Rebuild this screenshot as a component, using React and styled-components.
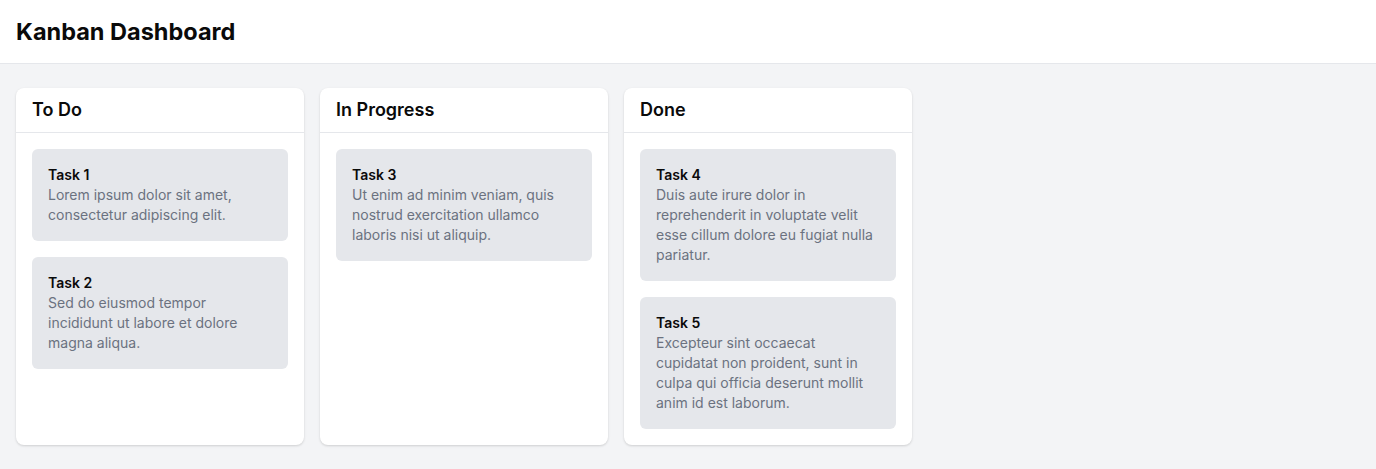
import React from "react";
import styled, { createGlobalStyle } from "styled-components";

const Global = createGlobalStyle`
  html, body { margin: 0; padding: 0; }
  body {
    font-family: Inter, "Noto Sans", sans-serif;
    background: #f3f4f6;
    color: #111827;
    -webkit-font-smoothing: antialiased;
  }
  * { box-sizing: border-box; }
`;

const Page = styled.div`
  min-height: 469px;
  background: #f3f4f6;
`;

const Header = styled.header`
  background: #ffffff;
  border-bottom: 1px solid #e5e7eb;
  padding: 16px;
`;

const Title = styled.h1`
  margin: 0;
  font-size: 23.5px;
  line-height: 31px;
  font-weight: 700;
  color: #0a0a0a;
`;

const Board = styled.main`
  display: flex;
  align-items: stretch;
  gap: 16px;
  padding: 24px 16px;
`;

const Column = styled.section`
  width: 288px;
  background: #ffffff;
  border-radius: 8px;
  box-shadow: 0 1px 3px rgba(0, 0, 0, 0.1), 0 1px 2px rgba(0, 0, 0, 0.06);
  display: flex;
  flex-direction: column;
`;

const ColumnHeader = styled.div`
  padding: 8px 16px;
  border-bottom: 1px solid #e5e7eb;
`;

const ColumnTitle = styled.h2`
  margin: 0;
  font-size: 18px;
  line-height: 28px;
  font-weight: 600;
  color: #0a0a0a;
`;

const CardList = styled.div`
  padding: 16px;
  display: flex;
  flex-direction: column;
  gap: 16px;
`;

const Card = styled.div`
  background: #e5e7eb;
  border-radius: 6px;
  padding: 16px;
`;

const CardTitle = styled.h3`
  margin: 0;
  font-size: 14px;
  line-height: 20px;
  font-weight: 600;
  color: #0a0a0a;
`;

const CardText = styled.p`
  margin: 0;
  font-size: 14px;
  line-height: 20px;
  color: #6b7280;
`;

const columns = [
  {
    title: "To Do",
    tasks: [
      { title: "Task 1", text: "Lorem ipsum dolor sit amet, consectetur adipiscing elit." },
      { title: "Task 2", text: "Sed do eiusmod tempor incididunt ut labore et dolore magna aliqua." },
    ],
  },
  {
    title: "In Progress",
    tasks: [
      { title: "Task 3", text: "Ut enim ad minim veniam, quis nostrud exercitation ullamco laboris nisi ut aliquip." },
    ],
  },
  {
    title: "Done",
    tasks: [
      { title: "Task 4", text: "Duis aute irure dolor in reprehenderit in voluptate velit esse cillum dolore eu fugiat nulla pariatur." },
      { title: "Task 5", text: "Excepteur sint occaecat cupidatat non proident, sunt in culpa qui officia deserunt mollit anim id est laborum." },
    ],
  },
];

export default function App() {
  return (
    <Page>
      <Global />
      <Header>
        <Title>Kanban Dashboard</Title>
      </Header>
      <Board>
        {columns.map((col) => (
          <Column key={col.title}>
            <ColumnHeader>
              <ColumnTitle>{col.title}</ColumnTitle>
            </ColumnHeader>
            <CardList>
              {col.tasks.map((t) => (
                <Card key={t.title}>
                  <CardTitle>{t.title}</CardTitle>
                  <CardText>{t.text}</CardText>
                </Card>
              ))}
            </CardList>
          </Column>
        ))}
      </Board>
    </Page>
  );
}
